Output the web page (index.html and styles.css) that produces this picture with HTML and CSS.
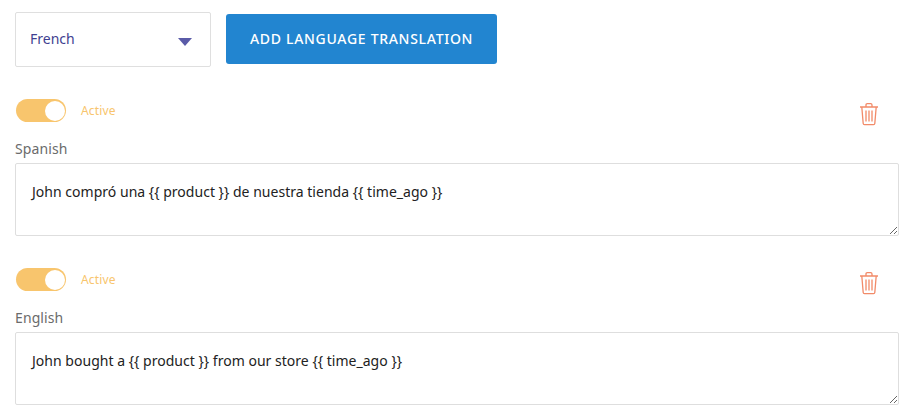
FILE: index.html
```html
<!DOCTYPE html>
<html lang="en">
<head>
<meta charset="utf-8">
<title>Translations</title>
<link rel="stylesheet" href="styles.css">
</head>
<body>
<div class="page">
  <div class="top">
    <div class="select"><span>French</span><svg class="caret" width="14" height="8" viewBox="0 0 14 8"><path d="M0 0H14L7 8Z"/></svg></div>
    <button class="add">ADD LANGUAGE TRANSLATION</button>
  </div>
  <section class="entry">
    <div class="head">
      <div class="toggle"><span class="knob"></span></div>
      <span class="state">Active</span>
      <svg class="trash" width="20" height="24" viewBox="0 0 20 24" fill="none"><path d="M1 5H19M7 5V3Q7 1.7 8.3 1.7H11.700Q13 1.700 13 3V5M2.800 5L4.200 21.500Q4.300 22.700 5.500 22.700H14.500Q15.700 22.700 15.800 21.500L17.200 5M7 8.500V19.500M10 8.500V19.500M13 8.500V19.500"/></svg>
    </div>
    <label class="lang">Spanish</label>
    <textarea class="text">John compró una {{ product }} de nuestra tienda {{ time_ago }}</textarea>
  </section>
  <section class="entry">
    <div class="head">
      <div class="toggle"><span class="knob"></span></div>
      <span class="state">Active</span>
      <svg class="trash" width="20" height="24" viewBox="0 0 20 24" fill="none"><path d="M1 5H19M7 5V3Q7 1.7 8.3 1.7H11.700Q13 1.700 13 3V5M2.800 5L4.200 21.500Q4.300 22.700 5.500 22.700H14.500Q15.700 22.700 15.800 21.500L17.200 5M7 8.500V19.500M10 8.500V19.500M13 8.500V19.500"/></svg>
    </div>
    <label class="lang">English</label>
    <textarea class="text">John bought a {{ product }} from our store {{ time_ago }}</textarea>
  </section>
</div>
</body>
</html>
```
FILE: styles.css
```css
* { box-sizing: border-box; }
html, body { margin: 0; background: #fff; overflow: hidden; }
body { font-family: "Noto Sans", "Open Sans", sans-serif; }
.page { padding: 12px 14px 0 15px; }
.top { display: flex; align-items: flex-start; gap: 15px; height: 55px; }
.select {
  width: 196px; height: 55px; padding: 0 18px 2px 14px;
  display: flex; align-items: center; justify-content: space-between;
  border: 1px solid #dfdfdf; border-radius: 2px;
  color: #3f3f91; font-size: 14px;
}
.caret { fill: #5a5ba8; margin-top: 6px; }
.add {
  width: 271px; height: 50px; margin-top: 2px; padding: 0 0 2px; border: 0; border-radius: 3px;
  background: #2285d0; color: #fff;
  font: 500 14px "Noto Sans", sans-serif; letter-spacing: 0.7px;
}
.entry { height: 169px; }
.top + .entry { margin-top: 32px; }
.head { display: flex; align-items: center; height: 23px; padding-left: 1px; }
.toggle {
  width: 50px; height: 23px; border-radius: 12px; background: #f8c56d;
  display: flex; justify-content: flex-end; align-items: center; padding-right: 1px;
}
.knob { width: 20px; height: 20px; border-radius: 50%; background: #fff; }
.state { margin-left: 15px; color: #f8c56d; font-size: 12px; letter-spacing: 0.15px; }
.trash { margin-left: auto; margin-right: 20px; margin-top: 6px; stroke: #f28a68; stroke-width: 1.3; }
.lang { display: block; margin-top: 18px; height: 23px; line-height: 18px; color: #6b6b6b; font-size: 14px; letter-spacing: 0.1px; }
.text {
  display: block; width: 884px; height: 73px; padding: 19px 16px;
  border: 1px solid #dedede; border-radius: 2px; outline: 0;
  font: 14px/18px "Noto Sans", sans-serif; color: #222; letter-spacing: 0.02px;
  resize: vertical;
}
```
